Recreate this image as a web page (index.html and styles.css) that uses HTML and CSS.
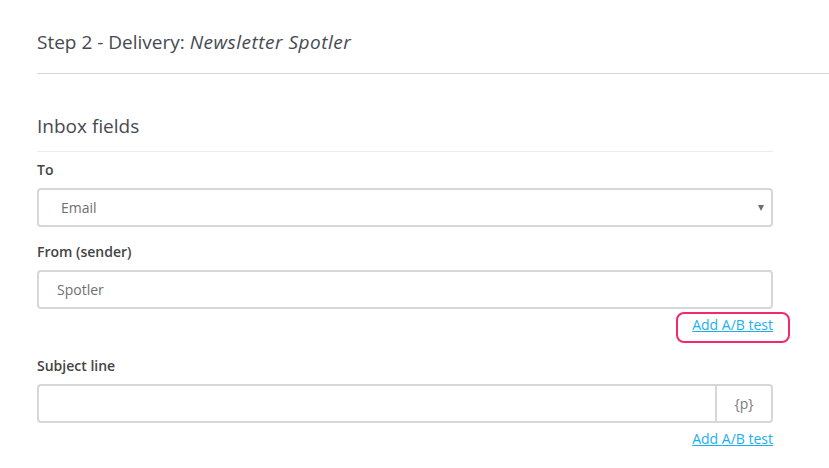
FILE: index.html
```html
<!DOCTYPE html>
<html>
<head>
<meta charset="utf-8">
<link rel="stylesheet" href="styles.css">
</head>
<body>
<div class="page">
  <header class="header">
    <h1 class="title">Step 2 - Delivery: <em>Newsletter Spotler</em></h1>
  </header>
  <section class="panel">
    <h2 class="section-title">Inbox fields</h2>
    <div class="field">
      <label class="label">To</label>
      <div class="select">
        <span class="select-value">Email</span>
        <span class="caret"></span>
      </div>
    </div>
    <div class="field">
      <label class="label">From (sender)</label>
      <div class="input"><span class="input-value">Spotler</span></div>
      <div class="link-row"><a class="ab-link highlighted" href="#">Add A/B test</a></div>
    </div>
    <div class="field">
      <label class="label">Subject line</label>
      <div class="input-group">
        <div class="input grow"></div>
        <div class="addon">{p}</div>
      </div>
      <div class="link-row"><a class="ab-link" href="#">Add A/B test</a></div>
    </div>
  </section>
</div>
</body>
</html>
```
FILE: styles.css
```css
* { box-sizing: border-box; }
html, body { margin: 0; padding: 0; background: #fff; }
body { font-family: "Open Sans", "Liberation Sans", sans-serif; color: #444; }
.page { padding-left: 37px; }
.header {
  padding-top: 30px;
  height: 74px;
  border-bottom: 1px solid #d6d6d6;
}
.title {
  margin: 0;
  font-size: 19px;
  line-height: 24px;
  font-weight: 400;
  color: #454a52;
}
.title em { font-style: italic; letter-spacing: 0.5px; }
.panel { width: 736px; padding-top: 40px; }
.section-title {
  margin: 0;
  font-size: 19px;
  line-height: 24px;
  font-weight: 400;
  color: #454a52;
  padding-bottom: 13px;
  border-bottom: 1px solid #ececec;
}
.field { display: flex; flex-direction: column; }
.label {
  font-size: 14px;
  line-height: 18px;
  font-weight: 600;
  color: #444;
  margin-top: 9px;
  margin-bottom: 9px;
}
.field + .field .label { margin-top: 16px; }
.field:nth-child(4) .label { margin-top: 23px; }
.select, .input {
  height: 39px;
  border: 2px solid #d7d7d7;
  border-radius: 4px;
  display: flex;
  align-items: center;
  font-size: 14px;
  color: #6f6f6f;
}
.select { padding-left: 22px; padding-right: 7px; justify-content: space-between; }
.input { padding-left: 18px; }
.caret {
  width: 0;
  height: 0;
  border-left: 3.5px solid transparent;
  border-right: 3.5px solid transparent;
  border-top: 6px solid #6a6f76;
  margin-top: 1px;
}
.input-group { display: flex; height: 39px; }
.input-group .grow { flex: 1; border-radius: 4px 0 0 4px; border-right: none; }
.addon {
  width: 58px;
  height: 39px;
  border: 2px solid #d7d7d7;
  border-radius: 0 4px 4px 0;
  display: flex;
  align-items: center;
  justify-content: center;
  font-size: 14px;
  color: #7a7a7a;
}
.link-row { display: flex; justify-content: flex-end; margin-top: 7px; }
.ab-link {
  font-size: 14px;
  line-height: 18px;
  color: #1ab0f0;
  text-decoration: underline;
  position: relative;
}
.highlighted::after {
  content: "";
  position: absolute;
  left: -16px;
  right: -17px;
  top: -4px;
  bottom: -9px;
  border: 2px solid #f2296e;
  border-radius: 8px;
}
```
